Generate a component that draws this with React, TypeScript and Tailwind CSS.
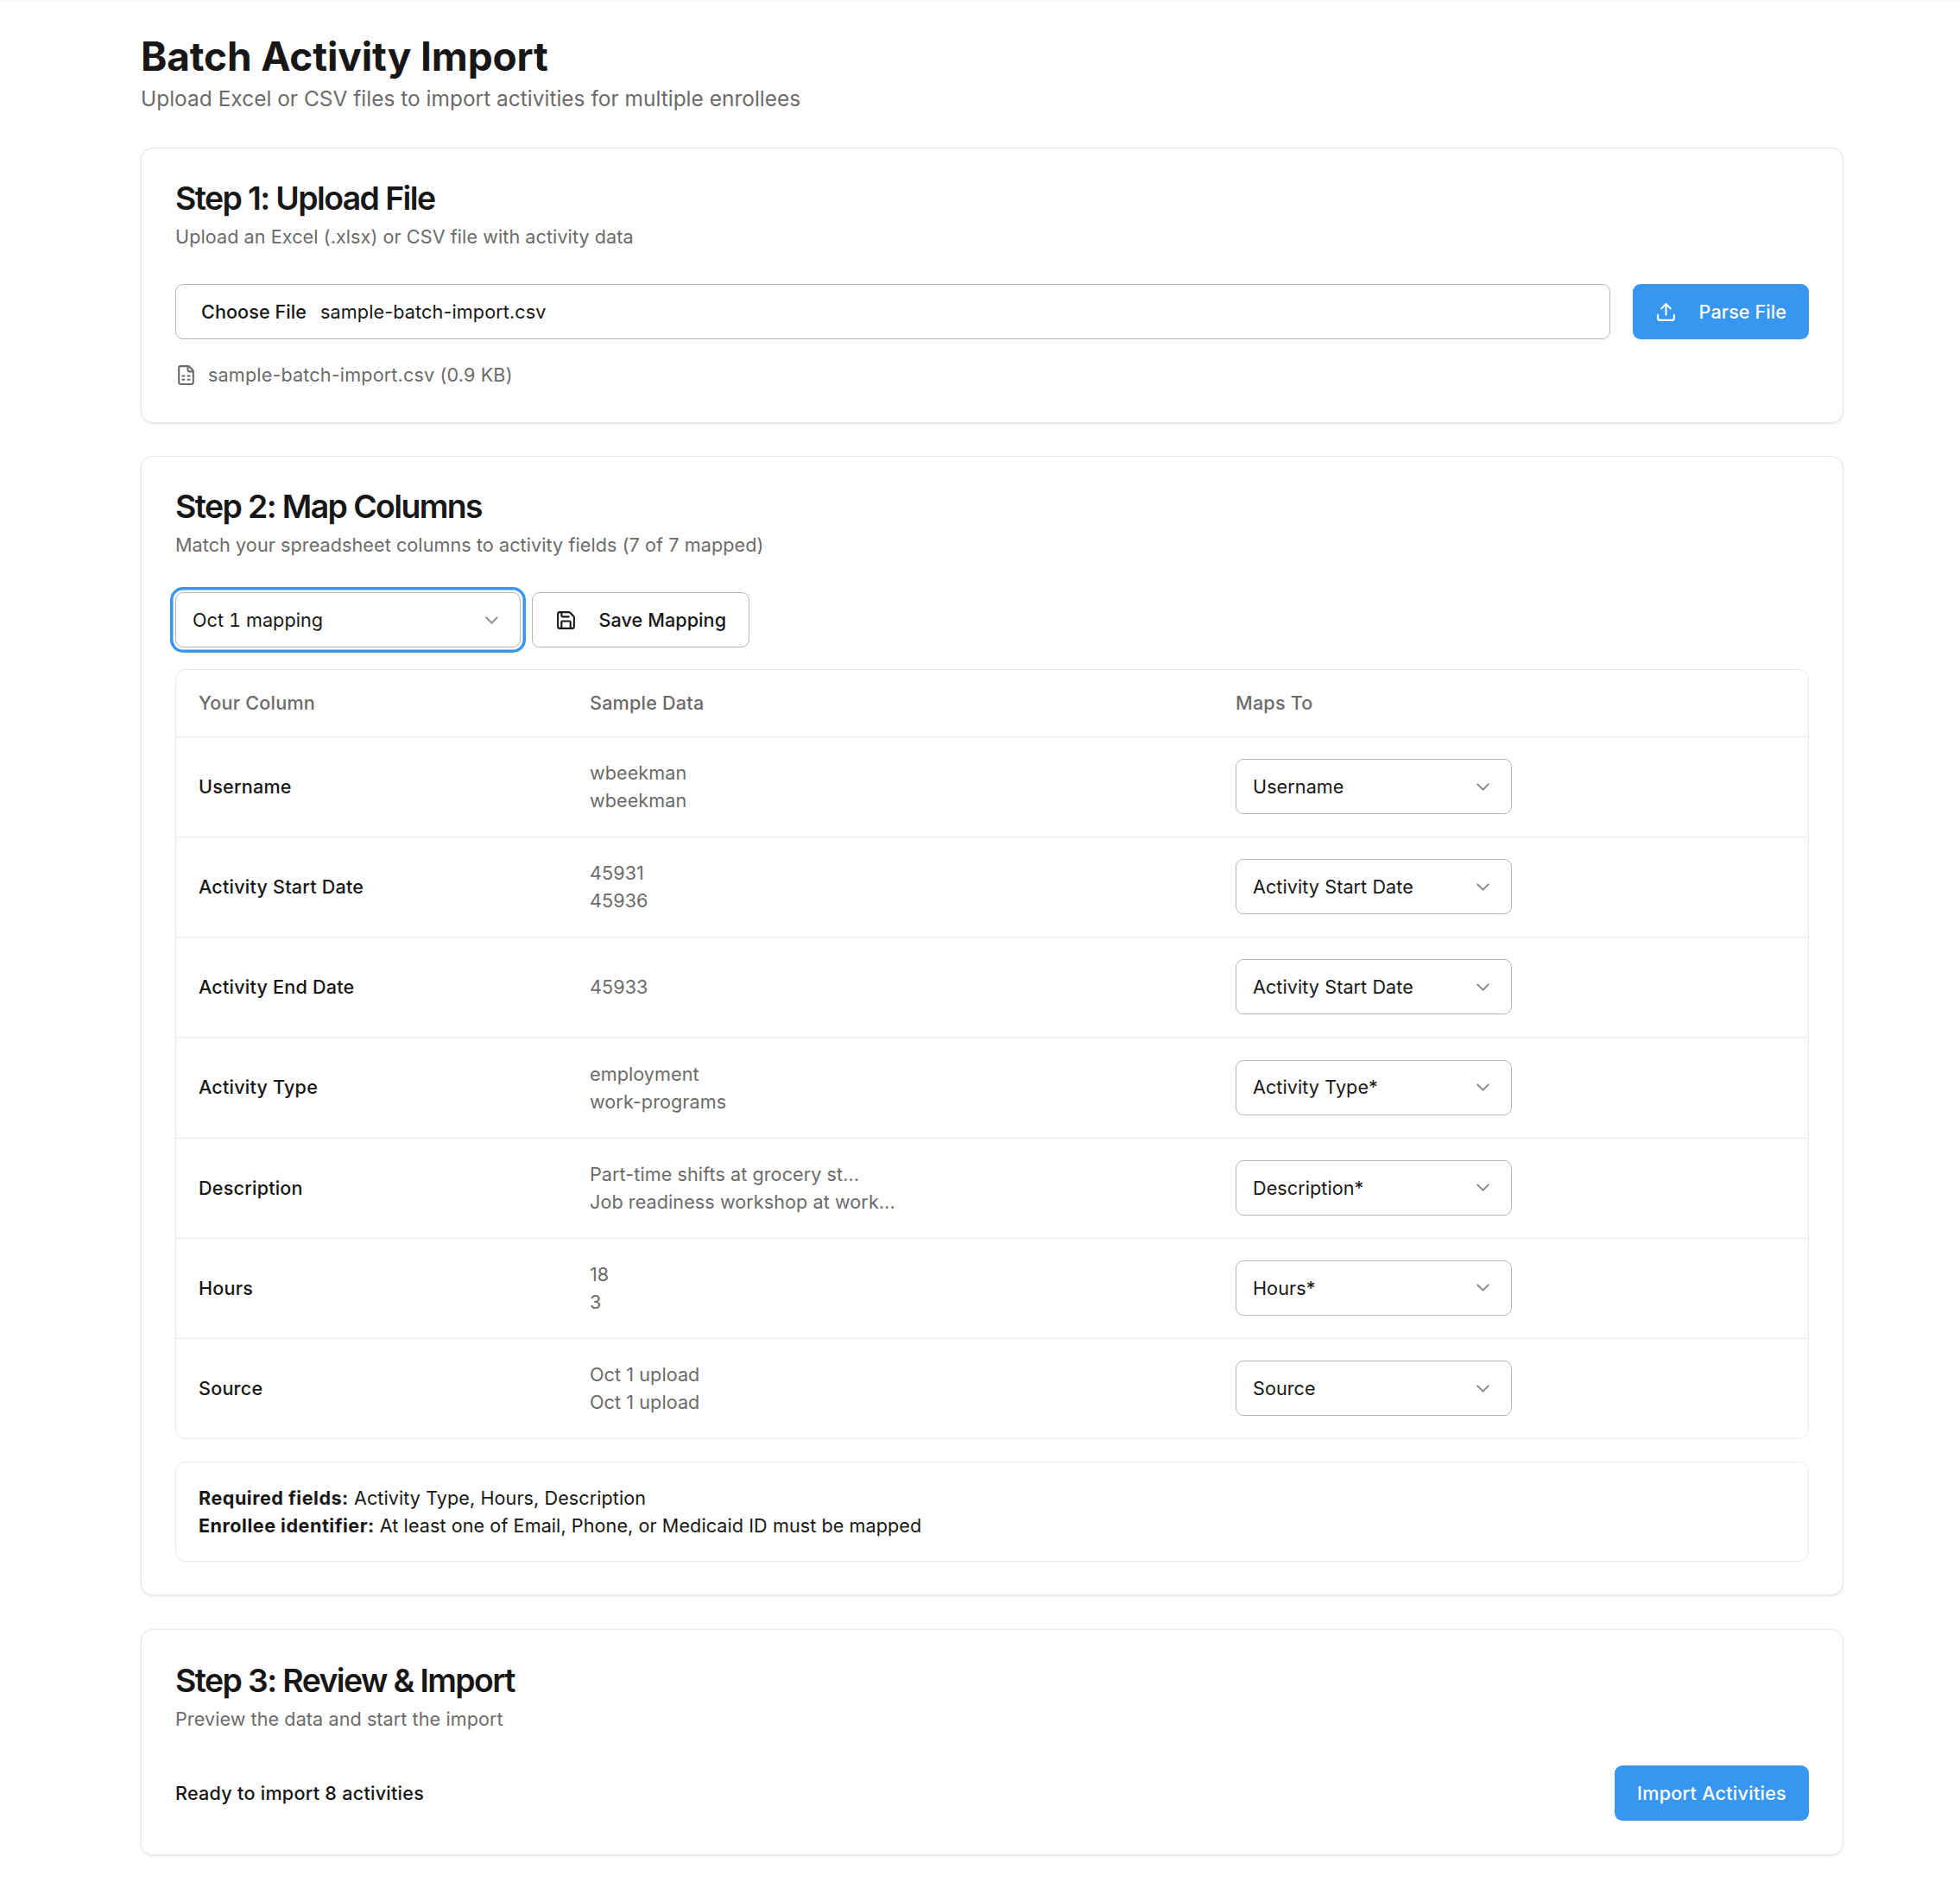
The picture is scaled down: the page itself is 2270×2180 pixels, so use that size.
import { ChevronDown, FileSpreadsheet, Save, Upload } from "lucide-react";

const rows: { name: string; samples: string[]; value: string }[] = [
  { name: "Username", samples: ["wbeekman", "wbeekman"], value: "Username" },
  { name: "Activity Start Date", samples: ["45931", "45936"], value: "Activity Start Date" },
  { name: "Activity End Date", samples: ["45933"], value: "Activity Start Date" },
  { name: "Activity Type", samples: ["employment", "work-programs"], value: "Activity Type*" },
  { name: "Description", samples: ["Part-time shifts at grocery st...", "Job readiness workshop at work..."], value: "Description*" },
  { name: "Hours", samples: ["18", "3"], value: "Hours*" },
  { name: "Source", samples: ["Oct 1 upload", "Oct 1 upload"], value: "Source" },
];

function CardHead({ title, desc }: { title: string; desc: string }) {
  return (
    <div className="flex flex-col gap-[12px]">
      <h2 className="text-[37.4px] leading-[36px] font-semibold tracking-[-1.6px] text-[#171717]">{title}</h2>
      <p className="text-[21.6px] leading-[29px] text-[#6b6b6b]">{desc}</p>
    </div>
  );
}

function SelectBox({ value, className }: { value: string; className: string }) {
  return (
    <div className={`h-[64px] flex items-center justify-between pl-[19px] pr-[20px] bg-white border border-[#b5b5b5] rounded-[9px] text-[21.6px] text-[#171717] ${className}`}>
      <span>{value}</span>
      <ChevronDown className="w-[25px] h-[25px] text-[#8a8a8a] shrink-0" strokeWidth={2} />
    </div>
  );
}

export default function App() {
  return (
    <div className="min-h-[2180px] bg-white text-[#171717] tracking-[0.07px] border-t-2 border-[#f9f9f9] [font-family:Inter,'Liberation_Sans',sans-serif]">
      <div className="ml-[163px] w-[1972px] pt-[37px] pb-[32px]">
        <header className="flex flex-col gap-[7px]">
          <h1 className="text-[46px] leading-[52px] font-bold tracking-[-0.15px] text-[#171717]">Batch Activity Import</h1>
          <p className="text-[24.48px] leading-[33px] tracking-normal text-[#6b6b6b]">Upload Excel or CSV files to import activities for multiple enrollees</p>
        </header>

        <section className="mt-[40px] border border-[#e8e8e8] rounded-[14px] bg-white shadow-[0_1px_3px_rgba(0,0,0,0.1)] px-[39px] pt-[40px] pb-[40px]">
          <CardHead title="Step 1: Upload File" desc="Upload an Excel (.xlsx) or CSV file with activity data" />
          <div className="mt-[40px] flex gap-[26px]">
            <div className="flex-1 h-[64px] flex items-center gap-[16px] border border-[#b5b5b5] rounded-[9px] pl-[29px] text-[21.6px]">
              <span className="font-medium">Choose File</span>
              <span className="tracking-[0.12px]">sample-batch-import.csv</span>
            </div>
            <button className="h-[64px] flex items-center gap-[26px] px-[26px] bg-[#3797f0] text-white rounded-[9px] text-[21.6px] font-medium">
              <Upload className="w-[25px] h-[25px]" strokeWidth={2} />
              Parse File
            </button>
          </div>
          <div className="mt-[27px] flex items-center gap-[13px] text-[21.6px] leading-[29px] tracking-[0.15px] text-[#6b6b6b]">
            <FileSpreadsheet className="w-[25px] h-[25px]" strokeWidth={2} />
            <span>sample-batch-import.csv (0.9 KB)</span>
          </div>
        </section>

        <section className="mt-[38px] border border-[#e8e8e8] rounded-[14px] bg-white shadow-[0_1px_3px_rgba(0,0,0,0.1)] px-[39px] pt-[40px] pb-[38px]">
          <CardHead title="Step 2: Map Columns" desc="Match your spreadsheet columns to activity fields (7 of 7 mapped)" />
          <div className="mt-[40px] flex gap-[13px]">
            <SelectBox value="Oct 1 mapping" className="w-[400px] tabular-nums ring-[3.5px] ring-[#3797f0] ring-offset-[2.5px] ring-offset-white" />
            <button className="h-[64px] flex items-center gap-[26px] px-[25.5px] border border-[#b5b5b5] rounded-[9px] text-[21.6px] font-medium bg-white">
              <Save className="w-[25px] h-[25px]" strokeWidth={2} />
              Save Mapping
            </button>
          </div>

          <div className="mt-[25px] border border-[#e8e8e8] rounded-[12px] overflow-hidden">
            <div className="grid grid-cols-[453px_748px_1fr] h-[77px] items-center text-[21.6px] font-medium tracking-[0.2px] text-[#6b6b6b]">
              <div className="pl-[26px]">Your Column</div>
              <div className="pl-[26px]">Sample Data</div>
              <div className="pl-[26px]">Maps To</div>
            </div>
            {rows.map((r) => (
              <div key={r.name} className="grid grid-cols-[453px_748px_1fr] h-[116.17px] pb-[1px] items-center border-t border-[#e8e8e8] text-[21.6px]">
                <div className="pl-[26px] font-medium tracking-[0.2px]">{r.name}</div>
                <div className="pl-[26px] leading-[32px] text-[#6b6b6b]">
                  {r.samples.map((s, i) => (
                    <div key={i}>{s}</div>
                  ))}
                </div>
                <div className="pl-[26px]">
                  <SelectBox value={r.value} className="w-[320px]" />
                </div>
              </div>
            ))}
          </div>

          <div className="mt-[26px] border border-[#e8e8e8] rounded-[12px] px-[26px] py-[25px] text-[21.6px] leading-[32px]">
            <div><strong className="font-bold tracking-[0.5px]">Required fields:</strong> Activity Type, Hours, Description</div>
            <div><strong className="font-bold tracking-[0.5px]">Enrollee identifier:</strong> At least one of Email, Phone, or Medicaid ID must be mapped</div>
          </div>
        </section>

        <section className="mt-[39px] border border-[#e8e8e8] rounded-[14px] bg-white shadow-[0_1px_3px_rgba(0,0,0,0.1)] px-[39px] pt-[41px] pb-[39px]">
          <CardHead title="Step 3: Review & Import" desc="Preview the data and start the import" />
          <div className="mt-[39px] flex items-center justify-between">
            <span className="text-[21.6px] font-medium tracking-[0.25px]">Ready to import 8 activities</span>
            <button className="h-[64px] flex items-center px-[26px] bg-[#3797f0] text-white rounded-[9px] text-[21.6px] font-medium tracking-[0.25px]">
              Import Activities
            </button>
          </div>
        </section>
      </div>
    </div>
  );
}
